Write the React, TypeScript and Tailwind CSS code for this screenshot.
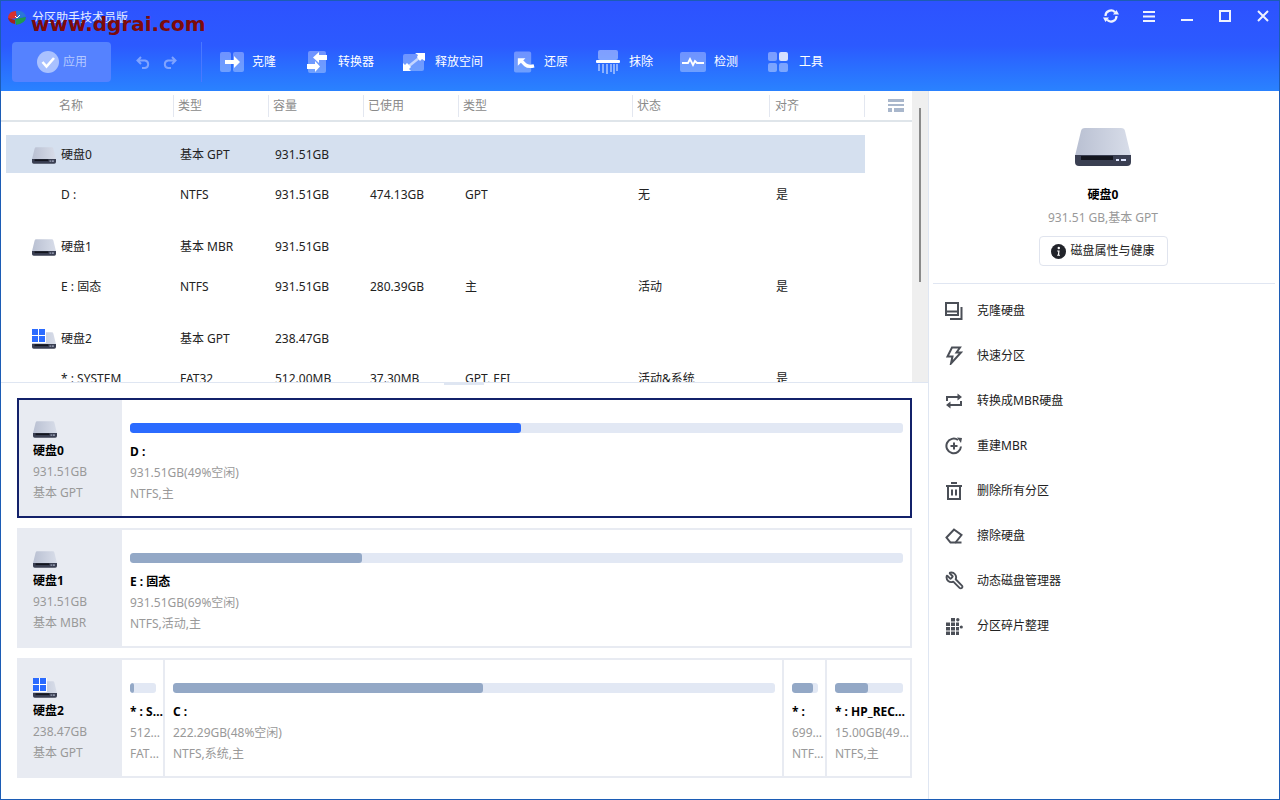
import { Wrench } from 'lucide-react';

const FONT = 'font-["Noto_Sans","Noto_Sans_CJK_SC",sans-serif]';

function DiskIcon({ className, id }: { className: string; id: string }) {
  return (
    <svg viewBox="0 0 56 38" className={className}>
      <defs>
        <linearGradient id={id} x1="0" y1="0" x2="1" y2="0">
          <stop offset="0" stopColor="#b9c0d2" />
          <stop offset="1" stopColor="#d8dde9" />
        </linearGradient>
      </defs>
      <path d="M6 3 Q6.5 0 10 0 H46 Q49.5 0 50 3 L56 28 H0 Z" fill={`url(#${id})`} />
      <path d="M0 27 H56 V34 Q56 38 52 38 H4 Q0 38 0 34 Z" fill="#3a3f52" />
      <rect x="6" y="28" width="32" height="4" fill="#14161f" />
      <rect x="41" y="31" width="3" height="2" fill="#dfe6ff" />
      <rect x="46" y="31" width="5" height="2" fill="#dfe6ff" />
    </svg>
  );
}

function WinDisk({ id }: { id: string }) {
  return (
    <div className="relative w-[24px] h-[20px] shrink-0">
      <DiskIcon id={id} className="absolute left-0 bottom-0 w-[24px] h-[17px]" />
      <svg viewBox="0 0 14 14" className="absolute left-0 top-0 w-[14px] h-[14px]">
        <rect width="14" height="14" fill="#fff" />
        <rect width="6" height="6" fill="#2b6bff" />
        <rect x="7" width="6" height="6" fill="#2b6bff" />
        <rect y="7" width="6" height="6" fill="#2b6bff" />
        <rect x="7" y="7" width="6" height="6" fill="#2b6bff" />
      </svg>
    </div>
  );
}

function AppLogo() {
  return (
    <svg viewBox="0 0 18 16" className="w-[18px] h-[16px]">
      <path d="M0 7 Q1 1 8 1 L9 8 L2 9 L1 10 Z" fill="#d8322e" />
      <path d="M8 1 Q15 0 18 6 L10 9 Z" fill="#2a77d8" />
      <path d="M7 9 L18 7 Q18 13 8 15 Z" fill="#1f9a50" />
      <path d="M0 8 L7 10 V14 Q1 13 0 8 Z" fill="#a3221f" />
      <path d="M7 6 L9 8 L12 5" stroke="#fff" strokeWidth="1" fill="none" />
    </svg>
  );
}

function CloneTool() {
  return (
    <svg viewBox="0 0 24 20" className="w-[24px] h-[20px]">
      <rect x="0" y="0" width="11" height="20" rx="2" fill="#fff" fillOpacity=".32" />
      <rect x="13" y="0" width="11" height="20" rx="2" fill="#fff" fillOpacity=".32" />
      <path d="M5 8 H14 V4 L20 10 L14 16 V12 H5 Z" fill="#fff" />
    </svg>
  );
}

function ConvertTool() {
  return (
    <svg viewBox="0 0 20 22" className="w-[20px] h-[22px]">
      <rect x="1" y="0" width="18" height="22" rx="2" fill="#fff" fillOpacity=".32" />
      <path d="M20 4 V9 H12 V12 L6 6.5 L12 1 V4 Z" fill="#fff" />
      <path d="M0 13 H8 V10 L13 15.5 L8 21 V18 H0 Z" fill="#fff" />
    </svg>
  );
}

function SpaceTool() {
  return (
    <svg viewBox="0 0 22 18" className="w-[22px] h-[18px]">
      <rect x="0" y="1" width="21" height="17" rx="2" fill="#fff" fillOpacity=".32" />
      <path d="M6 13 L16 5" stroke="#fff" strokeOpacity=".6" strokeWidth="2.5" />
      <path d="M12 0 H22 V8 L19 6 L17 8 L14 4 L15 2 Z" fill="#fff" />
      <path d="M0 10 L2 12 L4 10 L8 14 L6 16 L8 18 H0 Z" fill="#fff" />
    </svg>
  );
}

function RestoreTool() {
  return (
    <svg viewBox="0 0 22 22" className="w-[21px] h-[22px]">
      <rect x="0" y="0" width="18" height="22" rx="2" fill="#fff" fillOpacity=".32" />
      <path d="M4 7 H12 L4 15 Z" fill="#fff" />
      <path d="M7 9 L12 14 Q15 16.5 21 15" stroke="#fff" strokeWidth="3.6" fill="none" />
    </svg>
  );
}

function WipeTool() {
  return (
    <svg viewBox="0 0 24 24" className="w-[24px] h-[24px]">
      <rect x="2" y="0" width="20" height="10" rx="2" fill="#fff" fillOpacity=".4" />
      <rect x="0" y="10" width="24" height="3" rx="1" fill="#fff" />
      <g fill="#fff" fillOpacity=".45">
        <rect x="2" y="14" width="2" height="7" />
        <rect x="6" y="14" width="2" height="9" />
        <rect x="10" y="14" width="2" height="10" />
        <rect x="14" y="14" width="2" height="8" />
        <rect x="17" y="14" width="2" height="10" />
        <rect x="20" y="14" width="2" height="7" />
      </g>
    </svg>
  );
}

function CheckTool() {
  return (
    <svg viewBox="0 0 26 20" className="w-[26px] h-[20px]">
      <rect width="26" height="20" rx="2" fill="#fff" fillOpacity=".32" />
      <path d="M2 11 H8 L10 7 L13 13 L15 9 L17 11 H24" stroke="#fff" strokeWidth="1.8" fill="none" />
    </svg>
  );
}

function ToolsTool() {
  return (
    <svg viewBox="0 0 20 20" className="w-[20px] h-[20px]">
      <rect width="9" height="9" rx="2" fill="#fff" fillOpacity=".38" />
      <rect x="11" width="9" height="9" rx="2" fill="#fff" fillOpacity=".8" />
      <rect y="11" width="9" height="9" rx="2" fill="#fff" fillOpacity=".38" />
      <rect x="11" y="11" width="9" height="9" rx="2" fill="#fff" fillOpacity=".38" />
    </svg>
  );
}

function WindowButtons() {
  return (
    <div className="flex items-center text-[#eef2ff]">
      <svg viewBox="0 0 16 16" className="w-[16px] h-[16px] mr-[24px]" fill="none" stroke="currentColor" strokeWidth="2.2">
        <path d="M2.5 8 A5.5 5.5 0 0 1 12 4.2" />
        <path d="M13.5 8 A5.5 5.5 0 0 1 4 11.8" />
        <path d="M10 6.5 H16 L13.5 2 Z M6 9.5 H0 L2.5 14 Z" fill="currentColor" stroke="none" />
      </svg>
      <svg viewBox="0 0 12 11" className="w-[12px] h-[11px] mr-[26px]" fill="currentColor">
        <rect width="12" height="2" />
        <rect y="4.5" width="12" height="2" />
        <rect y="9" width="12" height="2" />
      </svg>
      <svg viewBox="0 0 12 12" className="w-[12px] h-[12px] mr-[26px]" fill="currentColor">
        <rect y="9" width="12" height="2" />
      </svg>
      <svg viewBox="0 0 12 12" className="w-[12px] h-[12px] mr-[26px]" fill="none" stroke="currentColor" strokeWidth="2">
        <rect x="1" y="1" width="10" height="10" />
      </svg>
      <svg viewBox="0 0 12 12" className="w-[12px] h-[12px] mr-[10px]" fill="none" stroke="currentColor" strokeWidth="2">
        <path d="M1 1 L11 11 M11 1 L1 11" />
      </svg>
    </div>
  );
}

function TopBar() {
  return (
    <div className="h-[90px] shrink-0 bg-gradient-to-b from-[#2d52ff] via-[#2c5aff] to-[#2a82ff] flex flex-col">
      <div className="h-[41px] flex items-center justify-between shrink-0 relative">
        <div className="flex items-center pl-[7px] -mt-[7px]">
          <AppLogo />
          <span className="ml-[6px] text-[12px] text-[#e6edff]">分区助手技术员版</span>
        </div>
        <div className="-mt-[11px]"><WindowButtons /></div>
      </div>
      <div className="flex items-start pl-[11px]">
        <div className="w-[99px] h-[40px] rounded-[4px] bg-[#5582ff] flex items-center pl-[25px]">
          <svg viewBox="0 0 22 22" className="w-[22px] h-[22px]">
            <circle cx="11" cy="11" r="11" fill="#a9c1ff" />
            <path d="M5.5 11 L9.5 15.5 L17 7" stroke="#fff" strokeWidth="2.6" fill="none" />
          </svg>
          <span className="ml-[4px] text-[12px] text-[#b4c9ff]">应用</span>
        </div>
        <div className="flex items-center h-[40px] ml-[25px] gap-[11px] text-[#7fa3ff]">
          <svg viewBox="0 0 15 13" className="w-[15px] h-[13px]" fill="none" stroke="currentColor" strokeWidth="2">
            <path d="M5 1 L1.5 4.5 L5 8 M2 4.5 H9 A3.8 3.8 0 0 1 9 12 H6" />
          </svg>
          <svg viewBox="0 0 15 13" className="w-[15px] h-[13px]" fill="none" stroke="currentColor" strokeWidth="2">
            <path d="M10 1 L13.5 4.5 L10 8 M13 4.5 H6 A3.8 3.8 0 0 0 6 12 H9" />
          </svg>
        </div>
        <div className="w-px h-[40px] bg-[#4a78ff] ml-[24px]" />
        <div className="flex items-center h-[40px] text-[12px] text-white ml-[18px]">
          <span className="w-[32px] flex"><CloneTool /></span>
          <span>克隆</span>
          <span className="w-[31px] flex ml-[31px]"><ConvertTool /></span>
          <span>转换器</span>
          <span className="w-[32px] flex ml-[29px]"><SpaceTool /></span>
          <span>释放空间</span>
          <span className="w-[30px] flex ml-[31px]"><RestoreTool /></span>
          <span>还原</span>
          <span className="w-[33px] flex ml-[28px]"><WipeTool /></span>
          <span>抹除</span>
          <span className="w-[34px] flex ml-[27px]"><CheckTool /></span>
          <span>检测</span>
          <span className="w-[31px] flex ml-[30px]"><ToolsTool /></span>
          <span>工具</span>
        </div>
      </div>
    </div>
  );
}

const HEADERS = [
  { label: '名称', cls: 'w-[173px] pl-[58px]' },
  { label: '类型', cls: 'w-[95px] pl-[4px]' },
  { label: '容量', cls: 'w-[95px] pl-[4px]' },
  { label: '已使用', cls: 'w-[95px] pl-[4px]' },
  { label: '类型', cls: 'w-[174px] pl-[4px]' },
  { label: '状态', cls: 'w-[137px] pl-[4px]' },
  { label: '对齐', cls: 'w-[95px] pl-[5px]' },
];

const GROUPS = [
  {
    name: '硬盘0', id: 'd0', kind: '基本 GPT', size: '931.51GB',
    part: ['D :', 'NTFS', '931.51GB', '474.13GB', 'GPT', '无', '是'],
  },
  {
    name: '硬盘1', id: 'd1', kind: '基本 MBR', size: '931.51GB',
    part: ['E : 固态', 'NTFS', '931.51GB', '280.39GB', '主', '活动', '是'],
  },
  {
    name: '硬盘2', id: 'd2', kind: '基本 GPT', size: '238.47GB', win: true,
    part: ['* : SYSTEM', 'FAT32', '512.00MB', '37.30MB', 'GPT, EFI', '活动&系统', '是'],
  },
];

const ROW_GRID = 'grid grid-cols-[174px_95px_95px_95px_173px_138px_89px] h-[38px] pt-[2px] items-center w-[859px] ml-[5px]';

function DiskTable() {
  return (
    <div className="h-[291px] shrink-0 flex relative">
      <div className="w-[911px] flex flex-col">
        <div className="h-[31px] shrink-0 flex items-center border-b-2 border-[#dfe5ea] relative text-[12px] text-[#8a8a8a]">
          {HEADERS.map((h, i) => (
            <div key={i} className={`${h.cls} h-[22px] flex items-center border-r border-[#e3e7f0]`}>{h.label}</div>
          ))}
          <svg viewBox="0 0 16 13" className="w-[16px] h-[13px] ml-[23px]" fill="#a9b7cc">
            <rect width="16" height="3" />
            <rect y="5" width="16" height="2" />
            <rect y="9" width="4" height="4" />
            <rect x="6" y="9" width="10" height="4" />
          </svg>
        </div>
        <div className="flex-1 overflow-hidden pt-[13px] text-[12px] text-[#222]">
          {GROUPS.map((g, i) => (
            <div key={g.id} className={i < 2 ? 'mb-[14px]' : ''}>
              <div className={`${ROW_GRID} ${i === 0 ? 'bg-[#d5e0ef]' : ''}`}>
                <div className="flex items-center pl-[26px] gap-[5px]">
                  {g.win ? <WinDisk id={`t${g.id}`} /> : <DiskIcon id={`t${g.id}`} className="w-[24px] h-[17px] shrink-0" />}
                  <span>{g.name}</span>
                </div>
                <div>{g.kind}</div>
                <div>{g.size}</div>
              </div>
              <div className={`${ROW_GRID} mt-[2px]`}>
                <div className="pl-[55px]">{g.part[0]}</div>
                {g.part.slice(1).map((v, j) => <div key={j}>{v}</div>)}
              </div>
            </div>
          ))}
        </div>
      </div>
      <div className="w-[16px] bg-[#efefef] relative">
        <div className="absolute left-[7px] top-[17px] w-[2px] h-[174px] bg-[#8a8a8a]" />
      </div>
    </div>
  );
}

type Part = { name: string; info: string; fs: string; used: number; width: string };

function Partition({ p, active }: { p: Part; active?: boolean }) {
  return (
    <div className={`${p.width} h-full bg-white pl-[8px] pt-[23px] overflow-hidden`}>
      <div className="h-[10px] mr-[7px] rounded-[3px] bg-[#e2e8f4] overflow-hidden">
        <div className={`h-full rounded-[3px] ${active ? 'bg-[#2b6bff]' : 'bg-[#93a8c6]'}`} style={{ width: `${p.used}%` }} />
      </div>
      <div className="mt-[8px] leading-[21px] font-bold text-black truncate">{p.name}</div>
      <div className="leading-[21px] text-[#999] truncate">{p.info}</div>
      <div className="leading-[21px] text-[#999] truncate">{p.fs}</div>
    </div>
  );
}

function DiskCard({ id, name, size, kind, win, active, parts }: {
  id: string; name: string; size: string; kind: string; win?: boolean; active?: boolean; parts: Part[];
}) {
  return (
    <div className={`h-[120px] border-2 flex text-[12px] ${active ? 'border-[#13216a]' : 'border-[#e8ebf2]'}`}>
      <div className="w-[103px] shrink-0 bg-[#e8ebf2] pl-[14px] pt-[18px]">
        <div className="h-[20px] flex items-end">
          {win ? <WinDisk id={`c${id}`} /> : <DiskIcon id={`c${id}`} className="w-[24px] h-[17px]" />}
        </div>
        <div className="mt-[2px] leading-[21px] font-bold text-black">{name}</div>
        <div className="leading-[21px] text-[#999]">{size}</div>
        <div className="leading-[21px] text-[#999]">{kind}</div>
      </div>
      <div className="flex-1 flex gap-[2px] min-w-0 bg-[#e8ebf2]">
        {parts.map((p, i) => <Partition key={i} p={p} active={active} />)}
      </div>
    </div>
  );
}

function DiskMap() {
  return (
    <div className="flex-1 pt-[15px] pl-[16px] pr-[16px] flex flex-col gap-[10px] relative border-t border-[#dfe6f2]">
      <div className="absolute left-[443px] top-0 w-[40px] h-[2px] bg-[#dfe6f2]" />
      <DiskCard id="0" name="硬盘0" size="931.51GB" kind="基本 GPT" active parts={[
        { name: 'D :', info: '931.51GB(49%空闲)', fs: 'NTFS,主', used: 50.6, width: 'flex-1' },
      ]} />
      <DiskCard id="1" name="硬盘1" size="931.51GB" kind="基本 MBR" parts={[
        { name: 'E : 固态', info: '931.51GB(69%空闲)', fs: 'NTFS,活动,主', used: 30, width: 'flex-1' },
      ]} />
      <DiskCard id="2" name="硬盘2" size="238.47GB" kind="基本 GPT" win parts={[
        { name: '* : SYSTEM', info: '512.00MB(92%空闲)', fs: 'FAT32,活动,系统', used: 15, width: 'w-[41px]' },
        { name: 'C :', info: '222.29GB(48%空闲)', fs: 'NTFS,系统,主', used: 51.5, width: 'w-[617px]' },
        { name: '* :', info: '699.00MB(10%空闲)', fs: 'NTFS,主', used: 81, width: 'w-[41px]' },
        { name: '* : HP_RECOVERY', info: '15.00GB(49%空闲)', fs: 'NTFS,主', used: 49, width: 'w-[83px]' },
      ]} />
    </div>
  );
}

const STROKE = { fill: 'none', stroke: '#4b4f57', strokeWidth: 2 };

const ACTIONS = [
  {
    label: '克隆硬盘',
    icon: (
      <svg viewBox="0 0 18 18" className="w-[18px] h-[18px]" {...STROKE}>
        <rect x="1" y="1" width="12" height="12" />
        <path d="M1 9.5 H13" />
        <path d="M16.5 5 V17 H5" />
      </svg>
    ),
  },
  {
    label: '快速分区',
    icon: (
      <svg viewBox="0 0 18 19" className="w-[18px] h-[19px]" {...STROKE}>
        <path d="M7 1.5 H15 L11.5 6.5 H16 L6 17.5 L7.5 10.5 H2.5 Z" />
      </svg>
    ),
  },
  {
    label: '转换成MBR硬盘',
    icon: (
      <svg viewBox="0 0 18 16" className="w-[18px] h-[16px]" {...STROKE}>
        <path d="M2 8 V4 H13" />
        <path d="M16 8 V12 H5" />
        <path d="M12.5 0.5 L17 4 L12.5 7.5 Z M5.5 8.5 L1 12 L5.5 15.5 Z" fill="#4b4f57" stroke="none" />
      </svg>
    ),
  },
  {
    label: '重建MBR',
    icon: (
      <svg viewBox="0 0 18 18" className="w-[18px] h-[18px]" {...STROKE}>
        <path d="M16 9.5 A7.3 7.3 0 1 1 13 3" />
        <path d="M9 5.5 V12.5 M5.5 9 H12.5" />
        <path d="M12 0.5 L17 1 L16 6 Z" fill="#4b4f57" stroke="none" />
      </svg>
    ),
  },
  {
    label: '删除所有分区',
    icon: (
      <svg viewBox="0 0 18 18" className="w-[18px] h-[18px]" {...STROKE}>
        <path d="M1 4 H17 M6 1 H12" />
        <path d="M3 4 V17 H15 V4" />
        <path d="M7 7.5 V13.5 M11 7.5 V13.5" />
      </svg>
    ),
  },
  {
    label: '擦除硬盘',
    icon: (
      <svg viewBox="0 0 18 16" className="w-[18px] h-[16px]" {...STROKE}>
        <path d="M1.5 9.5 L9 1.5 L16.5 7 L10.5 14.5 H5.5 Z" />
        <path d="M10.5 14.5 H16.5" />
      </svg>
    ),
  },
  {
    label: '动态磁盘管理器',
    icon: <Wrench className="w-[19px] h-[19px] -scale-x-100" stroke="#4b4f57" strokeWidth={2.4} />,
  },
  {
    label: '分区碎片整理',
    icon: (
      <svg viewBox="0 0 18 18" className="w-[18px] h-[18px]" fill="#4b4f57">
        <rect x="6" y="1" width="4" height="3.5" />
        <circle cx="12.8" cy="2.8" r="1.7" />
        <rect x="1" y="5.5" width="4" height="3.5" />
        <rect x="6" y="5.5" width="4" height="3.5" />
        <rect x="11" y="5.5" width="3" height="3.5" />
        <rect x="1" y="10" width="4" height="3.5" />
        <rect x="6" y="10" width="4" height="3.5" />
        <rect x="11" y="10" width="3" height="3.5" />
        <circle cx="16.3" cy="10" r="1.6" />
        <rect x="1" y="14.5" width="4" height="3.5" />
        <rect x="6" y="14.5" width="4" height="3.5" />
        <rect x="11" y="14.5" width="3" height="3.5" />
      </svg>
    ),
  },
];

function SidePanel() {
  return (
    <div className="flex-1 flex flex-col items-stretch border-l border-[#dfe6f2] text-[12px]">
      <div className="h-[193px] shrink-0 flex flex-col items-center pr-[2px] border-b border-[#e0e6f2] mx-[4px]">
        <DiskIcon id="side" className="w-[56px] h-[38px] mt-[37px]" />
        <div className="mt-[19px] leading-[20px] font-bold text-black">硬盘0</div>
        <div className="mt-[3px] leading-[20px] text-[#999]">931.51 GB,基本 GPT</div>
        <div className="mt-[8px] w-[129px] h-[30px] border border-[#e0e4ee] rounded-[4px] flex items-center justify-center gap-[4px] text-[#222]">
          <svg viewBox="0 0 16 16" className="w-[15px] h-[15px]">
            <circle cx="8" cy="8" r="8" fill="#22242b" />
            <circle cx="8.3" cy="4.2" r="1.3" fill="#fff" />
            <path d="M6.6 7 H9.2 L8.6 11.4 H9.6 V12.4 H6.6 V11.4 H7.3 L7.7 8 H6.6 Z" fill="#fff" />
          </svg>
          <span>磁盘属性与健康</span>
        </div>
      </div>
      <div className="pt-[4px] text-[#222]">
        {ACTIONS.map(a => (
          <div key={a.label} className="h-[45px] flex items-center">
            <div className="w-[48px] pl-[16px] flex items-center shrink-0">{a.icon}</div>
            <span>{a.label}</span>
          </div>
        ))}
      </div>
    </div>
  );
}

export default function App() {
  return (
    <div className={`${FONT} relative w-[1280px] h-[800px] bg-white border border-[#1c5cb5] overflow-hidden flex flex-col`}>
      <TopBar />
      <div className="flex-1 flex min-h-0">
        <div className="w-[927px] shrink-0 flex flex-col">
          <DiskTable />
          <DiskMap />
        </div>
        <SidePanel />
      </div>
      <div className='absolute left-[30px] top-[8px] font-["DejaVu_Sans",sans-serif] font-bold text-[20px] leading-[30px] text-[#7d0a0a] whitespace-nowrap'>www.dgrai.com</div>
    </div>
  );
}
